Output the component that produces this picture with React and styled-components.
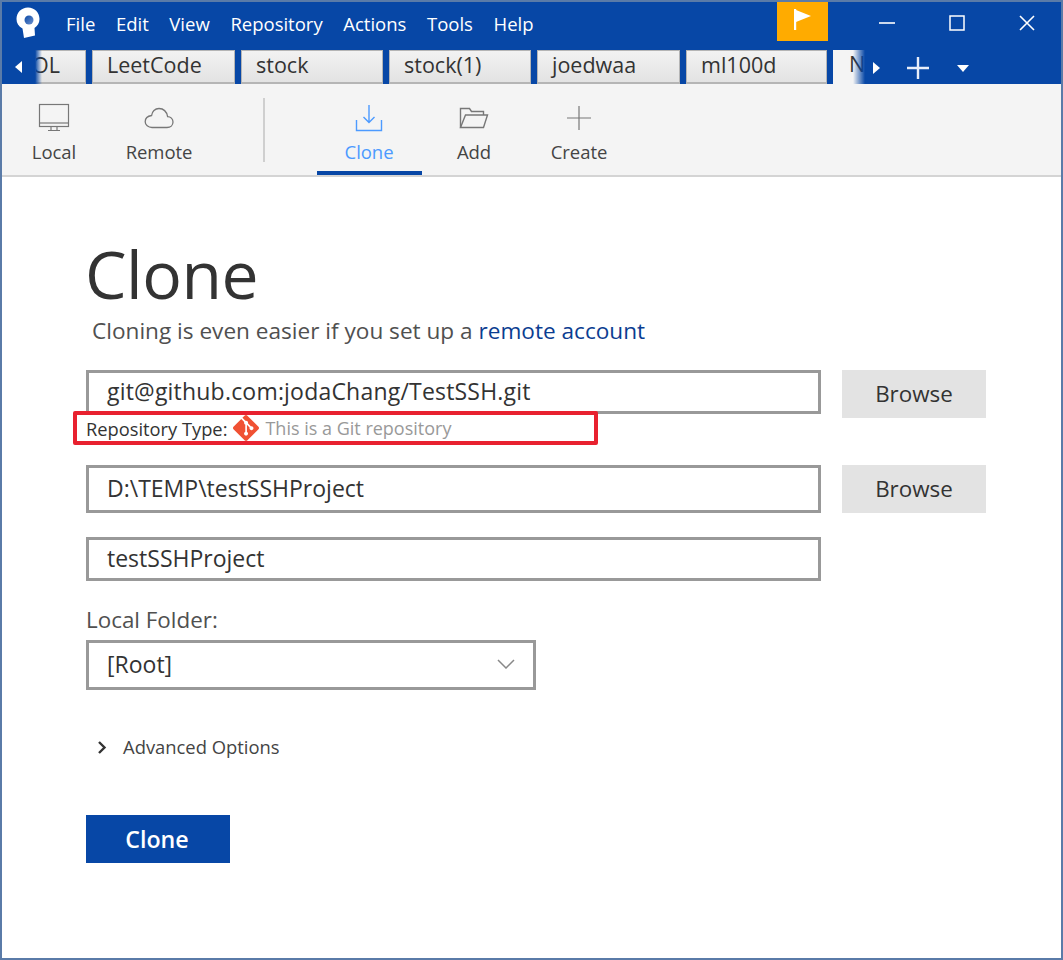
import React from 'react';
import styled, { createGlobalStyle } from 'styled-components';
import { SiGit } from 'react-icons/si';

const BLUE = '#0747a6';
const FONT = '"Open Sans", "Noto Sans", "Liberation Sans", sans-serif';

const Global = createGlobalStyle`
  html, body { margin: 0; padding: 0; background: #fff; }
  * { box-sizing: border-box; }
`;

const Frame = styled.div`
  width: 1063px;
  height: 960px;
  border: 2px solid #5a7ba8;
  font-family: ${FONT};
  color: #333;
  background: #fff;
  overflow: hidden;
`;

const TitleBar = styled.div`
  height: 46px;
  background: ${BLUE};
  display: flex;
  align-items: center;
  color: #fff;
`;

const Logo = styled.div`
  width: 60px;
  padding-left: 14px;
  margin-top: -4px;
  display: flex;
  align-items: center;
`;

const Menu = styled.nav`
  display: flex;
  gap: 20.6px;
  font-size: 18.5px;
  flex: 1;
  padding-left: 4px;
  margin-top: -3px;
`;

const FlagButton = styled.div`
  width: 51px;
  height: 39px;
  background: #ffab00;
  align-self: flex-start;
  display: flex;
  justify-content: center;
  padding-top: 7px;
`;

const WinControls = styled.div`
  display: flex;
  width: 210px;
  margin: -4px 0 0 23px;
`;

const WinButton = styled.div`
  flex: 1;
  display: flex;
  justify-content: center;
  align-items: center;
  padding-left: 2px;
`;

const TabBar = styled.div`
  height: 36px;
  background: ${BLUE};
  display: flex;
  position: relative;
  color: #fff;
`;

const ArrowSlot = styled.div`
  width: ${p => p.$w}px;
  display: flex;
  align-items: center;
  justify-content: center;
  padding-top: 2px;
`;

const TabStrip = styled.div`
  width: 830px;
  display: flex;
  gap: 6px;
  overflow: hidden;
  position: relative;
  &::before, &::after {
    content: '';
    position: absolute;
    top: 0;
    bottom: 0;
    width: 7px;
    z-index: 1;
  }
  &::before { left: 0; background: linear-gradient(to right, ${BLUE}, rgba(7,71,166,0)); }
  &::after { right: 0; width: 12px; background: linear-gradient(to left, ${BLUE}, rgba(7,71,166,0)); }
`;

const Tab = styled.div`
  flex: 0 0 ${p => p.$w}px;
  min-width: 0;
  overflow: hidden;
  height: ${p => (p.$active ? 36 : 34)}px;
  margin-top: 2px;
  background: ${p => (p.$active ? '#f4f4f4' : 'linear-gradient(#f2f2f2, #e3e3e3)')};
  border: ${p => (p.$active ? 'none' : '1px solid #b5b5b5')};
  border-bottom-width: ${p => (p.$active ? 0 : 2)}px;
  color: #333;
  font-size: 21.5px;
  line-height: 28px;
  padding-left: ${p => p.$pad}px;
  white-space: nowrap;
  display: flex;
  justify-content: ${p => (p.$end ? 'flex-end' : 'flex-start')};
  padding-right: ${p => (p.$end ? '25px' : '0')};
`;

const TabTools = styled.div`
  display: flex;
  align-items: center;
  padding-top: 2px;
`;

const Toolbar = styled.div`
  height: 93px;
  background: #f4f4f4;
  border-bottom: 2px solid #d4d4d4;
  display: flex;
`;

const ToolGroup = styled.div`
  display: flex;
  padding-left: ${p => p.$left}px;
`;

const ToolButton = styled.div`
  width: 105px;
  height: 91px;
  display: flex;
  flex-direction: column;
  align-items: center;
  font-size: 18.5px;
  letter-spacing: -0.05px;
  color: ${p => (p.$active ? '#4c9aff' : '#444')};
  border-bottom: 4px solid ${p => (p.$active ? BLUE : 'transparent')};
  padding-top: 17px;
  margin-bottom: -2px;
`;

const ToolIcon = styled.div`
  height: 33px;
  margin-left: -2px;
  display: flex;
  align-items: center;
  justify-content: center;
`;

const ToolLabel = styled.div`
  margin: 6px 1px 0 0;
  line-height: 24px;
`;

const Divider = styled.div`
  width: 2px;
  height: 64px;
  margin: 14px 0 0 51px;
  background: #cfcfcf;
`;

const Content = styled.main`
  padding: 58px 0 0 84px;
`;

const Title = styled.h1`
  margin: 0 0 0 -1px;
  font-size: 66px;
  font-weight: 400;
  line-height: 76px;
  letter-spacing: -0.5px;
  color: #333;
`;

const Subtitle = styled.p`
  margin: 5px 0 24px 6px;
  font-size: 22.6px;
  line-height: 30px;
  color: #505050;
`;

const RemoteLink = styled.a`
  color: #0b3d91;
`;

const FieldRow = styled.div`
  display: flex;
  gap: 21px;
  align-items: flex-start;
`;

const Field = styled.div`
  width: ${p => p.$w || 735}px;
  height: ${p => p.$h}px;
  border: 3px solid #999;
  display: flex;
  align-items: center;
  justify-content: space-between;
  padding: 0 18px 2px;
  font-size: 23px;
  letter-spacing: ${p => p.$track || 0}px;
  color: #333;
  background: #fff;
`;

const Browse = styled.div`
  width: 144px;
  height: 48px;
  background: #e3e3e3;
  display: flex;
  align-items: center;
  justify-content: center;
  padding-bottom: 1px;
  font-size: 22.4px;
  color: #333;
`;

const TypeHighlight = styled.div`
  width: 525px;
  height: 34px;
  margin: -7px 0 20px -13px;
  border: 4px solid #e8212f;
  border-radius: 2px;
  display: flex;
  align-items: center;
  position: relative;
  padding-left: 9px;
  font-size: 18.3px;
  white-space: nowrap;
  color: #333;
`;

const GitIcon = styled(SiGit)`
  color: #f05133;
  margin: 0 6px;
  flex: none;
`;

const Muted = styled.span`
  color: #999;
  font-size: 18px;
`;

const Spaced = styled.div`
  margin-top: ${p => p.$top}px;
`;

const FieldLabel = styled.div`
  margin-top: 24px;
  font-size: 22.4px;
  line-height: 30px;
  color: #505050;
  height: 35px;
`;

const Advanced = styled.div`
  margin-top: 44px;
  display: flex;
  align-items: center;
  padding-left: 11px;
  gap: 16px;
  font-size: 18.4px;
  color: #444;
  line-height: 26px;
`;

const CloneButton = styled.div`
  margin-top: 55px;
  width: 144px;
  height: 48px;
  background: ${BLUE};
  color: #fff;
  display: flex;
  align-items: center;
  justify-content: center;
  padding-right: 2px;
  font-size: 23.2px;
  font-weight: 600;
`;

const tabs = [
  { name: 'LeetCode', w: 143 },
  { name: 'stock', w: 142 },
  { name: 'stock(1)', w: 142 },
  { name: 'joedwaa', w: 143 },
  { name: 'ml100d', w: 141 },
];

const gray = '#777';

const App = () => (
  <>
    <Global />
    <Frame>
      <TitleBar>
        <Logo>
          <svg width="24" height="32" viewBox="0 0 24 32">
            <defs>
              <linearGradient id="hole" x1="0" y1="0" x2="1" y2="1">
                <stop offset="0" stopColor={BLUE} />
                <stop offset="1" stopColor="#6f93cf" />
              </linearGradient>
            </defs>
            <path d="M12 .5C5.500.5.500 5.500.500 12c0 4 2 7.500 6 9.500L8 31l11-2.500-.5-7.500c3-2 5-5 5-9C23.500 5.500 18.500.5 12 .5z" fill="#fff" />
            <circle cx="13" cy="13" r="4.500" fill="url(#hole)" />
          </svg>
        </Logo>
        <Menu>
          <span>File</span>
          <span>Edit</span>
          <span>View</span>
          <span>Repository</span>
          <span>Actions</span>
          <span>Tools</span>
          <span>Help</span>
        </Menu>
        <FlagButton>
          <svg width="18" height="22" viewBox="0 0 18 22">
            <rect x="0" y="0" width="2.2" height="21" fill="#fff" />
            <path d="M2 1l15 6-15 6z" fill="#fff" />
          </svg>
        </FlagButton>
        <WinControls>
          <WinButton>
            <svg width="16" height="16" viewBox="0 0 16 16"><path d="M0 8h16" stroke="#fff" strokeWidth="1.6" /></svg>
          </WinButton>
          <WinButton>
            <svg width="16" height="16" viewBox="0 0 16 16"><rect x="1" y="1" width="14" height="14" fill="none" stroke="#fff" strokeWidth="1.5" /></svg>
          </WinButton>
          <WinButton>
            <svg width="16" height="16" viewBox="0 0 16 16"><path d="M1 1l14 14M15 1L1 15" stroke="#fff" strokeWidth="1.6" /></svg>
          </WinButton>
        </WinControls>
      </TitleBar>
      <TabBar>
        <ArrowSlot $w={33}>
          <svg width="7" height="12" viewBox="0 0 7 12"><path d="M7 0v12L0 6z" fill="#fff" /></svg>
        </ArrowSlot>
        <TabStrip>
          <Tab $w={51} $end>OL</Tab>
          {tabs.map(t => (
            <Tab key={t.name} $w={t.w} $pad={14}>{t.name}</Tab>
          ))}
          <Tab $w={40} $pad={16} $active>New</Tab>
        </TabStrip>
        <TabTools>
          <ArrowSlot $w={22}>
            <svg width="7" height="12" viewBox="0 0 7 12"><path d="M0 0v12l7-6z" fill="#fff" /></svg>
          </ArrowSlot>
          <ArrowSlot $w={62}>
            <svg width="22" height="22" viewBox="0 0 22 22"><path d="M0 11h22M11 0v22" stroke="#e8eefa" strokeWidth="2.4" /></svg>
          </ArrowSlot>
          <ArrowSlot $w={28}>
            <svg width="12" height="7" viewBox="0 0 12 7"><path d="M0 0h12L6 7z" fill="#fff" /></svg>
          </ArrowSlot>
        </TabTools>
      </TabBar>
      <Toolbar>
        <ToolGroup $left={0}>
          <ToolButton>
            <ToolIcon>
              <svg width="32" height="30" viewBox="0 0 32 30" fill="none" stroke={gray} strokeWidth="1.2">
                <rect x="1.5" y="1.5" width="29" height="22" />
                <path d="M1.5 20h29" />
                <path d="M13 24v3M19 24v3M10 27.5h12" />
              </svg>
            </ToolIcon>
            <ToolLabel>Local</ToolLabel>
          </ToolButton>
          <ToolButton>
            <ToolIcon>
              <svg width="30" height="22" viewBox="0 0 30 22" fill="none" stroke={gray} strokeWidth="1.3">
                <path d="M8 20.5h15c3.5 0 6-2.4 6-5.5s-2.4-5.4-5.4-5.4C22.6 4.5 19.3 1.5 15 1.5 11 1.5 8 4.5 7.6 8.5 4 9 1.2 11.300 1.2 14.700c0 3.300 3 5.800 6.800 5.800z" />
              </svg>
            </ToolIcon>
            <ToolLabel>Remote</ToolLabel>
          </ToolButton>
        </ToolGroup>
        <ToolGroup $left={0}>
          <Divider />
        </ToolGroup>
        <ToolGroup $left={52}>
          <ToolButton $active>
            <ToolIcon>
              <svg width="28" height="28" viewBox="0 0 28 28" fill="none" stroke="#4c9aff" strokeWidth="1.4">
                <path d="M14 1v17M8.500 13l5.500 5.500 5.500-5.500" />
                <path d="M1.500 16v10.500h25V16" />
              </svg>
            </ToolIcon>
            <ToolLabel>Clone</ToolLabel>
          </ToolButton>
          <ToolButton>
            <ToolIcon>
              <svg width="30" height="22" viewBox="0 0 30 22" fill="none" stroke={gray} strokeWidth="1.4">
                <path d="M1.500 20.500V1.500h9l2 3h12v3.500" />
                <path d="M1.500 20.500l5-12.500h22l-4 12.500z" />
              </svg>
            </ToolIcon>
            <ToolLabel>Add</ToolLabel>
          </ToolButton>
          <ToolButton>
            <ToolIcon>
              <svg width="24" height="24" viewBox="0 0 24 24" fill="none" stroke={gray} strokeWidth="1.2">
                <path d="M0 12h24M12 0v24" />
              </svg>
            </ToolIcon>
            <ToolLabel>Create</ToolLabel>
          </ToolButton>
        </ToolGroup>
      </Toolbar>
      <Content>
        <Title>Clone</Title>
        <Subtitle>
          Cloning is even easier if you set up a <RemoteLink>remote account</RemoteLink>
        </Subtitle>
        <FieldRow>
          <Field $h={44} $track={0.2}>git@github.com:jodaChang/TestSSH.git</Field>
          <Browse>Browse</Browse>
        </FieldRow>
        <TypeHighlight>
          Repository Type:
          <GitIcon size={26} />
          <Muted>This is a Git repository</Muted>
        </TypeHighlight>
        <FieldRow>
          <Field $h={48}>D:\TEMP\testSSHProject</Field>
          <Browse>Browse</Browse>
        </FieldRow>
        <Spaced $top={24}>
          <Field $h={44}>testSSHProject</Field>
        </Spaced>
        <FieldLabel>Local Folder:</FieldLabel>
        <Field $w={450} $h={50}>
          [Root]
          <svg width="18" height="10" viewBox="0 0 18 10" fill="none" stroke="#888" strokeWidth="1.5">
            <path d="M1 1l8 8 8-8" />
          </svg>
        </Field>
        <Advanced>
          <svg width="10" height="13" viewBox="0 0 10 13" fill="none" stroke="#333" strokeWidth="2.4">
            <path d="M2 1l5.500 5.500L2 12" />
          </svg>
          Advanced Options
        </Advanced>
        <CloneButton>Clone</CloneButton>
      </Content>
    </Frame>
  </>
);

export default App;
